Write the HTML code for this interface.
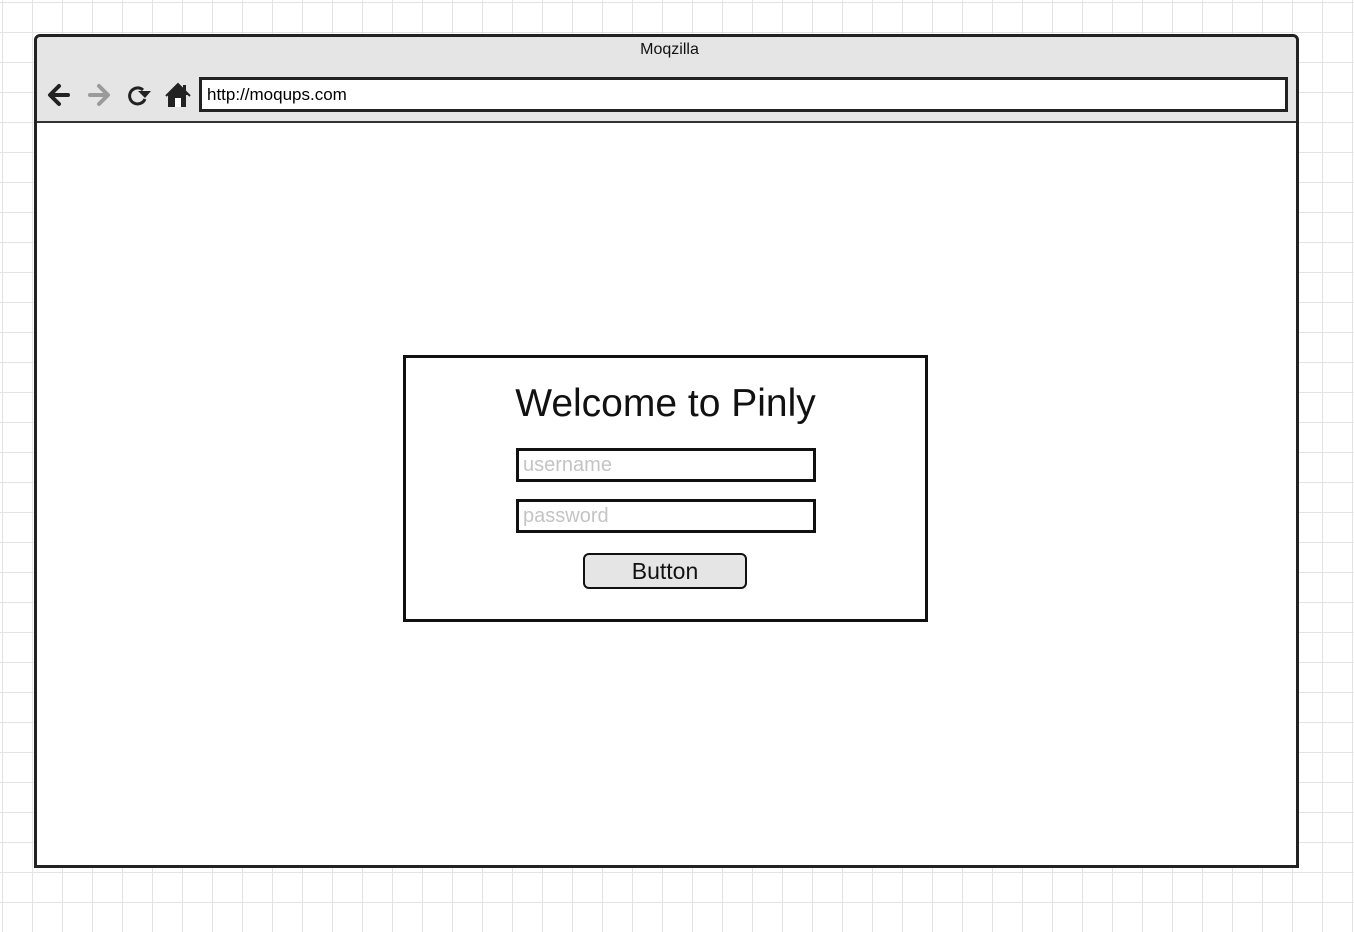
<!DOCTYPE html>
<html><head><style>
html,body{margin:0;padding:0}
body{width:1354px;height:932px;position:relative;overflow:hidden;background-color:#fff;
background-image:linear-gradient(to right,#e3e3e3 1px,transparent 1px),linear-gradient(to bottom,#e3e3e3 1px,transparent 1px);
background-size:30px 30px;background-position:2px 2px;font-family:"Liberation Sans",Arial,sans-serif}
.win{position:absolute;left:34px;top:34px;width:1259px;height:828px;border:3px solid #222;border-radius:6px 6px 0 0;background:#fff}
.hdr{position:absolute;left:0;top:0;right:0;height:84px;background:#e5e5e5;border-bottom:2px solid #333;border-radius:4px 4px 0 0}
.title{position:absolute;left:0;right:0;top:4px;text-align:center;font-size:16px;color:#111;padding-left:6px}
.addr{position:absolute;left:162px;top:40px;width:1078px;height:29px;border:3px solid #222;background:#fff;font-size:17px;line-height:29px;padding-left:5px;box-sizing:content-box}
.box{position:absolute;left:403px;top:355px;width:519px;height:261px;border:3px solid #111;background:#fff}
.h{position:absolute;left:0;right:0;top:24px;text-align:center;font-size:39px;color:#111}
.in{position:absolute;left:516px;height:28px;border:3px solid #111;color:#c4c4c4;font-size:20px;line-height:28px;padding-left:4px;box-sizing:content-box;width:290px}
.btn{position:absolute;left:583px;top:553px;width:160px;height:32px;border:2px solid #111;border-radius:6px;background:#e5e5e5;text-align:center;font-size:23px;line-height:32px;color:#111}
</style></head><body>
<div class="win">
<div class="hdr">
<div class="title">Moqzilla</div>
<svg style="position:absolute;left:8px;top:44px" width="150" height="28" viewBox="0 0 150 28">
<path d="M23 14H6M14 5L5 14L14 23" stroke="#222" stroke-width="4" fill="none" stroke-linecap="round" stroke-linejoin="round"/>
<path d="M45 14H62M54 5L63 14L54 23" stroke="#9a9a9a" stroke-width="4" fill="none" stroke-linecap="round" stroke-linejoin="round"/>
<path d="M98 9A8 8 0 1 0 100 18" stroke="#222" stroke-width="3" fill="none"/>
<path d="M93 10L106 10L100 17Z" fill="#222"/>
<path d="M122 14L133 4L144 14H141V26H123V14Z" fill="#222"/><rect x="130" y="17" width="6" height="9" fill="#fff"/><rect x="138" y="4" width="3" height="7" fill="#222"/><path d="M121 15L133 3L145 15" stroke="#222" stroke-width="2" fill="none"/>
</svg>
<div class="addr">http://moqups.com</div>
</div>
</div>
<div class="box"><div class="h">Welcome to Pinly</div></div>
<div class="in" style="top:448px">username</div>
<div class="in" style="top:499px">password</div>
<div class="btn">Button</div>
</body></html>
